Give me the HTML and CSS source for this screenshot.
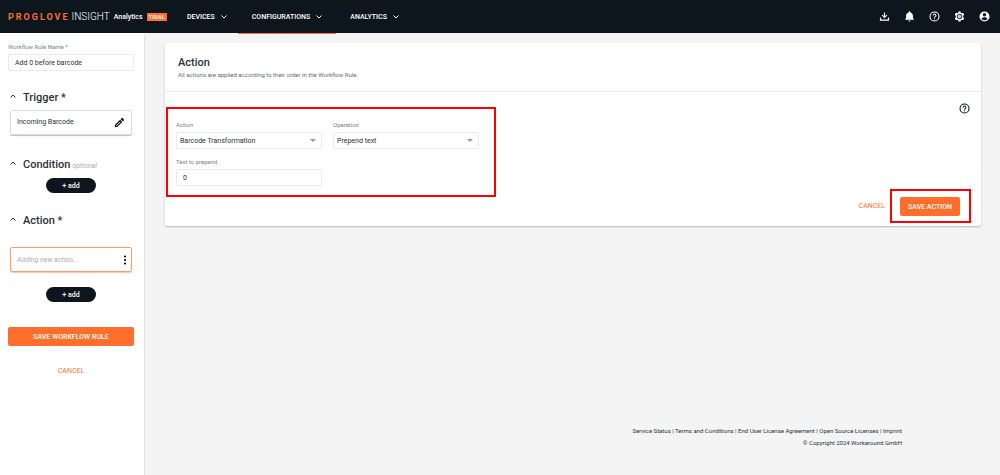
FILE: index.html
```html
<!DOCTYPE html>
<html lang="en">
<head>
<meta charset="utf-8">
<meta name="viewport" content="width=device-width, initial-scale=1">
<title>ProGlove Insight</title>
<link rel="stylesheet" href="styles.css">
</head>
<body class="page">
<header class="topbar">
  <div class="brand">
    <span class="brand-name">PROGLOVE</span>
    <span class="brand-product">INSIGHT</span>
    <span class="brand-plan">Analytics</span>
    <span class="brand-badge">TRIAL</span>
  </div>
  <nav class="menu">
    <button class="menu-item" type="button">DEVICES <svg class="caret" viewBox="0 0 6 4"><path d="M.5.5 3 3 5.500.5"/></svg></button>
    <button class="menu-item menu-item-active" type="button">CONFIGURATIONS <svg class="caret" viewBox="0 0 6 4"><path d="M.5.5 3 3 5.500.5"/></svg></button>
    <button class="menu-item" type="button">ANALYTICS <svg class="caret" viewBox="0 0 6 4"><path d="M.5.5 3 3 5.500.5"/></svg></button>
  </nav>
  <div class="tools">
    <button class="tool" type="button" aria-label="Download"><svg class="icon" viewBox="0 0 24 24"><path d="M10.700 3h2.600v8.200l3-3 1.700 1.700-6 6-6-6 1.700-1.700 3 3zM2 14h2.600v4.400h14.800V14H22v7H2z"/></svg></button>
    <button class="tool" type="button" aria-label="Notifications"><svg class="icon" viewBox="0 0 24 24"><path d="M12 23c1.300 0 2.400-1 2.400-2.200H9.600C9.600 22 10.700 23 12 23zm7.500-7v-5.500c0-3.600-2-6.500-5.500-7.300V2.500a2 2 0 0 0-4 0v.7C6.500 4 4.500 6.900 4.500 10.500V16L2.500 18v1.200h19V18z"/></svg></button>
    <button class="tool" type="button" aria-label="Help"><svg class="icon" viewBox="0 0 24 24"><path d="M11 18h2v-2h-2zm1-17a11 11 0 1 0 0 22 11 11 0 0 0 0-22zm0 19.600a8.600 8.600 0 1 1 0-17.200 8.600 8.600 0 0 1 0 17.200zM12 5.500a4.200 4.200 0 0 0-4.200 4.200h2.200a2 2 0 0 1 4 0c0 2-3.100 1.900-3.100 5h2.200c0-2.200 3.100-2.500 3.100-5A4.200 4.200 0 0 0 12 5.500z"/></svg></button>
    <button class="tool" type="button" aria-label="Settings"><svg class="icon" viewBox="0 0 24 24"><path class="gear-body" d="M9.700 1h4.600l.6 3 1.800 1 3.200-1 2.300 4-2.300 2.500v3l2.300 2.500-2.300 4-3.200-1-1.800 1-.6 3H9.700l-.6-3-1.800-1-3.200 1-2.300-4 2.300-2.500v-3L1.800 8l2.300-4 3.200 1 1.800-1z"/><circle class="gear-ring" cx="12" cy="12" r="5"/></svg></button>
    <button class="tool" type="button" aria-label="Account"><svg class="icon" viewBox="0 0 24 24"><path d="M12 1a11 11 0 1 0 0 22 11 11 0 0 0 0-22zm0 3.500a3.800 3.800 0 1 1 0 7.600 3.800 3.800 0 0 1 0-7.600zm0 15.800a8 8 0 0 1-6.600-3.500c0-2.200 4.400-3.400 6.600-3.400s6.600 1.200 6.600 3.400a8 8 0 0 1-6.600 3.500z"/></svg></button>
  </div>
</header>
<div class="layout">
  <aside class="sidebar">
    <label class="label" for="rule-name">Workflow Rule Name *</label>
    <input class="control" id="rule-name" type="text" value="Add 0 before barcode">

    <section class="step step-trigger">
      <h2 class="step-title"><svg class="chevron" viewBox="0 0 6 4"><path d="M.6 3.400 3 1l2.400 2.400"/></svg>Trigger *</h2>
      <div class="step-card">
        <span>Incoming Barcode</span>
        <button class="icon-button" type="button" aria-label="Edit trigger"><svg class="pencil" viewBox="0 0 24 24"><path d="M2 17.300V22h4.700L18 10.700 13.300 6zM4.600 19.600v-1.200L13.300 9.700l1.200 1.200-8.700 8.700zM21.600 7a1.300 1.300 0 0 0 0-1.800l-2.800-2.800a1.300 1.300 0 0 0-1.800 0L14.600 4.800l4.600 4.600z"/></svg></button>
      </div>
    </section>

    <section class="step step-condition">
      <h2 class="step-title"><svg class="chevron" viewBox="0 0 6 4"><path d="M.6 3.400 3 1l2.400 2.400"/></svg>Condition <em class="optional">optional</em></h2>
      <button class="add" type="button">+ add</button>
    </section>

    <section class="step step-action">
      <h2 class="step-title"><svg class="chevron" viewBox="0 0 6 4"><path d="M.6 3.400 3 1l2.400 2.400"/></svg>Action *</h2>
      <div class="step-card step-card-new">
        <em>Adding new action...</em>
        <button class="icon-button" type="button" aria-label="Action options"><svg class="dots" viewBox="0 0 4 10"><circle cx="2" cy="1.500" r="1.100"/><circle cx="2" cy="5" r="1.100"/><circle cx="2" cy="8.500" r="1.100"/></svg></button>
      </div>
      <button class="add" type="button">+ add</button>
    </section>

    <button class="primary save-rule" type="button">SAVE WORKFLOW RULE</button>
    <button class="link-button" type="button">CANCEL</button>
  </aside>

  <main class="main">
    <section class="panel">
      <div class="panel-head">
        <h1 class="panel-title">Action</h1>
        <p class="panel-note">All actions are applied according to their order in the Workflow Rule.</p>
      </div>
      <div class="panel-body">
        <div class="fields highlight">
          <div class="field">
            <label class="label" for="action">Action</label>
            <div class="select"><select class="control" id="action"><option>Barcode Transformation</option></select></div>
          </div>
          <div class="field">
            <label class="label" for="operation">Operation</label>
            <div class="select"><select class="control" id="operation"><option>Prepend text</option></select></div>
          </div>
          <div class="field">
            <label class="label" for="prepend">Text to prepend</label>
            <input class="control" id="prepend" type="text" value="0">
          </div>
        </div>
        <div class="panel-side">
          <button class="icon-button panel-help" type="button" aria-label="Help"><svg class="icon" viewBox="0 0 24 24"><path d="M11 18h2v-2h-2zm1-17a11 11 0 1 0 0 22 11 11 0 0 0 0-22zm0 19.600a8.600 8.600 0 1 1 0-17.200 8.600 8.600 0 0 1 0 17.200zM12 5.500a4.200 4.200 0 0 0-4.200 4.200h2.200a2 2 0 0 1 4 0c0 2-3.100 1.900-3.100 5h2.200c0-2.200 3.100-2.500 3.100-5A4.200 4.200 0 0 0 12 5.500z"/></svg></button>
          <div class="panel-actions">
            <button class="link-button" type="button">CANCEL</button>
            <div class="highlight highlight-save"><button class="primary" type="button">SAVE ACTION</button></div>
          </div>
        </div>
      </div>
    </section>
    <footer class="footer">
      <div><a href="#">Service Status</a> | <a href="#">Terms and Conditions</a> | <a href="#">End User License Agreement</a> | <a href="#">Open Source Licenses</a> | <a href="#">Imprint</a></div>
      <div>© Copyright 2024 Workaround GmbH</div>
    </footer>
  </main>
</div>
</body>
</html>
```
FILE: styles.css
```css
* {
  box-sizing: border-box;
}

.page {
  display: flex;
  flex-direction: column;
  min-height: 100vh;
  margin: 0;
  background: #f4f4f4;
  color: #2b3238;
  font: 7px/10px Roboto, "Liberation Sans", sans-serif;
}

button,
input,
select {
  margin: 0;
  padding: 0;
  border: 0;
  background: none;
  color: inherit;
  font: inherit;
}

button {
  cursor: pointer;
}

svg {
  display: block;
  flex: none;
}

/* Top bar */
.topbar {
  display: flex;
  height: 33px;
  padding: 0 10px 0 8px;
  background: #0d161d;
  color: #fff;
}

.brand {
  display: flex;
  align-items: center;
  width: 171px;
  white-space: nowrap;
}

.brand-name {
  color: #ff6f2b;
  font-size: 9px;
  font-weight: 700;
  letter-spacing: 2px;
}

.brand-product {
  margin-left: 2px;
  font-size: 10px;
  font-weight: 300;
}

.brand-plan {
  margin-left: 4px;
  font-weight: 500;
}

.brand-badge {
  margin-left: 4px;
  padding: 0 2px;
  background: #ff6f2b;
  font-size: 6px;
  font-weight: 500;
  line-height: 8px;
}

.menu {
  display: flex;
}

.menu-item {
  display: flex;
  align-items: center;
  gap: 6px;
  padding: 0 8px;
  font-weight: 500;
}

.menu-item-active {
  margin: 0 6px 0 3px;
  padding: 0 14px;
  box-shadow: 0 1px #ff6f2b;
}

.caret,
.chevron {
  width: 6px;
  height: 4px;
  fill: none;
  stroke: currentColor;
}

.tools {
  display: flex;
  align-items: center;
  gap: 14px;
  margin-left: auto;
}

.icon {
  width: 11px;
  height: 11px;
  fill: currentColor;
}

.gear-ring {
  fill: #c9cccf;
  stroke: #0d161d;
  stroke-width: 2;
}

/* Shared controls */
.layout {
  display: flex;
  flex: 1;
}

.label {
  display: block;
  margin-bottom: 2px;
  color: #7c8288;
  font-size: 6px;
  line-height: 10px;
}

.control {
  display: block;
  width: 100%;
  height: 17px;
  padding: 0 6px;
  border: 1px solid #ebebeb;
  border-radius: 2px;
  background: #fff;
}

.select {
  position: relative;
}

.select .control {
  padding: 0 3px;
  appearance: none;
}

.select::after {
  content: "";
  position: absolute;
  top: 7px;
  right: 6px;
  border: 3px solid transparent;
  border-top-color: #999;
  border-bottom: 0;
  pointer-events: none;
}

.primary {
  height: 19px;
  border-radius: 2px;
  background: #ff6f2b;
  color: #fff;
  font-weight: 500;
}

.link-button {
  color: #ff6f2b;
}

.icon-button {
  color: #0d161d;
}

/* Sidebar */
.sidebar {
  display: flex;
  flex-direction: column;
  flex: none;
  width: 144px;
  padding: 9px 10px 0 8px;
  background: #fff;
  box-shadow: 0 2px 2px rgba(0, 0, 0, 0.25);
}

.step {
  display: flex;
  flex-direction: column;
  padding: 0 2px;
}

.step-trigger {
  margin-top: 20px;
}

.step-condition {
  margin-top: 22px;
}

.step-action {
  margin-top: 21px;
}

.step-title {
  display: flex;
  align-items: center;
  margin: 0;
  font-size: 11px;
  font-weight: 500;
  line-height: 14px;
}

.chevron {
  margin: 0 7px 4px 0;
  stroke-width: 1;
}

.optional {
  margin-left: 2px;
  padding-top: 2px;
  color: #a9adb1;
  font-size: 7px;
  font-weight: 400;
}

.step-card {
  display: flex;
  align-items: center;
  justify-content: space-between;
  height: 25px;
  margin-top: 5px;
  padding: 0 6px 2px;
  border: 1px solid #ddd;
  border-radius: 2px;
  box-shadow: 0 1px 1px rgba(0, 0, 0, 0.25);
}

.step-card .pencil {
  margin-top: 2px;
}

.step-card-new {
  margin: 19px 0 15px;
  padding: 0 4px 0 6px;
  border-color: #ff9a6b;
  box-shadow: 0 1px 1px rgba(255, 111, 43, 0.4);
  color: #a9adb1;
}

.pencil {
  width: 11px;
  height: 11px;
}

.dots {
  width: 4px;
  height: 10px;
}

.add {
  align-self: center;
  width: 50px;
  height: 15px;
  border-radius: 8px;
  background: #0d161d;
  color: #fff;
  font-weight: 500;
}

.step-condition .add {
  margin-top: 5px;
}

.save-rule {
  margin: 25px 0 20px;
}

/* Main panel */
.main {
  display: flex;
  flex: 1;
  flex-direction: column;
  padding: 10px 19px 26px 21px;
}

.panel {
  border-radius: 2px;
  background: #fff;
  box-shadow: 0 1px 2px rgba(0, 0, 0, 0.25);
}

.panel-head {
  padding: 13px 13px 11px;
  border-bottom: 1px solid #e8e8e8;
}

.panel-title {
  margin: 0;
  font-size: 11px;
  font-weight: 500;
  line-height: 14px;
}

.panel-note {
  margin: 0;
  color: #666b70;
  font-size: 6px;
}

.panel-body {
  display: flex;
  justify-content: space-between;
  padding: 10px 10px 3px 1px;
}

.highlight {
  border: 2px solid #f00;
}

.fields {
  display: grid;
  grid-template-columns: 146px 146px;
  gap: 8px 11px;
  margin: 5px 0 26px;
  padding: 11px 15px 9px 8px;
}

.panel-side {
  display: flex;
  flex-direction: column;
  align-items: flex-end;
  justify-content: space-between;
}

.panel-help {
  margin: 1px 1px 0 0;
}

.panel-actions {
  display: flex;
  align-items: center;
  gap: 5px;
}

.highlight-save {
  padding: 6px 9px 5px 8px;
}

.highlight-save .primary {
  display: block;
  width: 60px;
}

/* Footer */
.footer {
  margin-top: auto;
  padding-right: 79px;
  font-size: 6px;
  line-height: 12px;
  text-align: right;
}

.footer a {
  color: inherit;
  text-decoration: none;
}
```
